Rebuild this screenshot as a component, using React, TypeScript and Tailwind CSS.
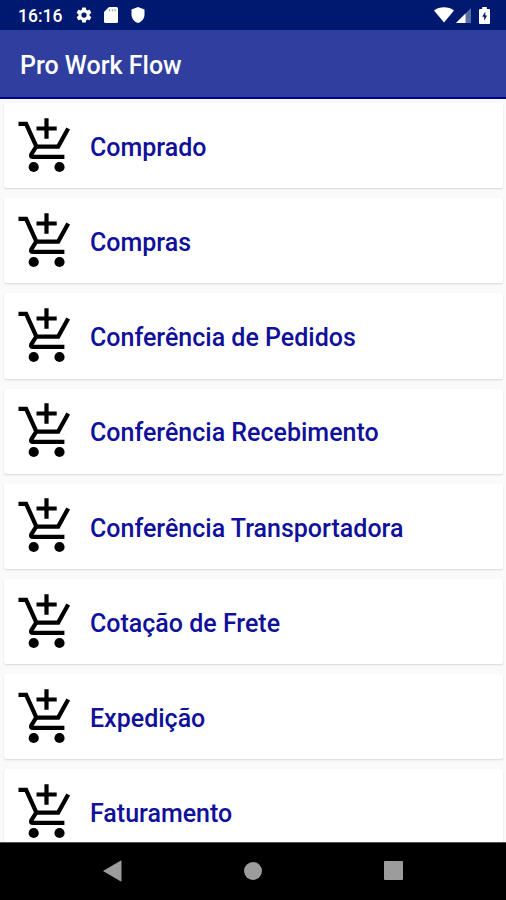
type CartRowProps = {
  label: string;
};

const sections = [
  "Comprado",
  "Compras",
  "Conferência de Pedidos",
  "Conferência Recebimento",
  "Conferência Transportadora",
  "Cotação de Frete",
  "Expedição",
  "Faturamento",
];

function AddCartIcon() {
  return (
    <svg width="54" height="56" viewBox="0 0 54 56" className="mb-[2px] shrink-0">
      <g fill="none" stroke="#000" strokeWidth="4.2">
        <path d="M1.5 6.8h7.600l10.300 22.800h21.800l10-18.200" />
        <path d="M19.200 29.600l-4.900 7.800q-.9 2.500 1.600 2.500h31.500" />
        <path d="M29.500 1.200v20.600M19.500 11.500h20.200" />
      </g>
      <circle cx="16.700" cy="50" r="5.100" />
      <circle cx="42.500" cy="50" r="5.100" />
    </svg>
  );
}

function CartRow({ label }: CartRowProps) {
  return (
    <div className="flex h-[85.2px] shrink-0 items-center rounded-[2px] bg-white pl-[13px] shadow-[0_1px_2px_rgba(0,0,0,0.14)]">
      <AddCartIcon />
      <span className="ml-[19px] pt-[4px] text-[25px] font-medium text-[#10109a]">
        {label}
      </span>
    </div>
  );
}

function StatusBar() {
  return (
    <div className="flex h-[30px] shrink-0 items-center bg-[#001970] pl-[18px] pr-[16.5px] text-white">
      <span className="pt-[2px] text-[17.5px] font-medium">16:16</span>
      <svg width="18" height="18" viewBox="0 0 24 24" fill="currentColor" className="ml-[13px]">
        <path d="M19.4 13a7.500 7.500 0 0 0 0-2l2.100-1.650a.5.5 0 0 0 .12-.64l-2-3.460a.5.5 0 0 0-.61-.22l-2.490 1a7.300 7.300 0 0 0-1.690-.98l-.38-2.650A.49.49 0 0 0 14 2h-4a.49.49 0 0 0-.49.42l-.38 2.650c-.61.250-1.170.59-1.690.98l-2.490-1a.5.5 0 0 0-.61.22l-2 3.460a.5.5 0 0 0 .12.64L4.570 11a7.900 7.900 0 0 0 0 2l-2.110 1.650a.5.5 0 0 0-.12.64l2 3.460c.12.22.39.3.61.22l2.490-1c.52.4 1.080.73 1.690.98l.38 2.650c.03.240.240.42.49.42h4c.250 0 .46-.18.49-.42l.38-2.650c.61-.250 1.170-.59 1.690-.98l2.490 1c.23.09.49 0 .61-.22l2-3.460a.5.5 0 0 0-.12-.64L19.400 13ZM12 15.500a3.500 3.500 0 1 1 0-7 3.500 3.500 0 0 1 0 7Z" />
      </svg>
      <svg width="14" height="16" viewBox="0 0 14 16" className="ml-[11px]">
        <path d="M5 0h7.500Q14 0 14 1.500v13q0 1.500-1.500 1.500h-11Q0 16 0 14.500V5Z" fill="#fff" />
        <path d="M5.500 2v2.500M8.300 2v2.500M11 2v2.500" stroke="#8c97c0" strokeWidth="1" />
      </svg>
      <svg width="14" height="16" viewBox="0 0 14 16" fill="#fff" className="ml-[13px]">
        <path d="M7 0l6.500 2.400v5c0 4-2.600 7.200-6.500 8.600C3.100 14.600.5 11.400.5 7.400v-5Z" />
      </svg>
      <svg width="20" height="16" viewBox="0 0 20 16" fill="#fff" className="ml-auto">
        <path d="M0 3.500C5.500-.8 14.500-.8 20 3.500L10 15.500Z" />
      </svg>
      <svg width="15" height="15" viewBox="0 0 15 15" className="ml-[2px]">
        <path d="M0 15L15 0v15Z" fill="#5b6da5" />
        <path d="M0 15L9.500 5.500V15Z" fill="#fff" />
      </svg>
      <svg width="11" height="17" viewBox="0 0 11 17" className="ml-[8px]">
        <path d="M3.200 0h4.600v2H10q1 0 1 1v13q0 1-1 1H1q-1 0-1-1V3q0-1 1-1h2.200Z" fill="#fff" />
        <path d="M6.300 4.800L3.200 9.800h2v4l2.900-5.200h-1.800Z" fill="#001970" />
      </svg>
    </div>
  );
}

function NavigationBar() {
  return (
    <div className="flex h-[58px] shrink-0 items-center justify-between border-t border-[#555] bg-black px-[103px] pb-[2px]">
      <svg width="19" height="22" viewBox="0 0 19 22" fill="#9c9c9c">
        <path d="M0 11L17.500.8q1-.6 1 .5v19.400q0 1.100-1 .5Z" />
      </svg>
      <div className="h-[18px] w-[18px] rounded-full bg-[#9c9c9c]" />
      <div className="h-[19px] w-[19px] rounded-[1px] bg-[#9c9c9c]" />
    </div>
  );
}

export default function App() {
  return (
    <div className="flex h-[900px] w-[506px] flex-col overflow-hidden bg-[#fafafa] font-['Roboto',sans-serif]">
      <StatusBar />
      <div className="flex h-[69px] shrink-0 items-center border-b-2 border-[#00008b] bg-[#303f9f] pl-5 pt-[5px]">
        <h1 className="text-[25px] font-medium text-white">Pro Work Flow</h1>
      </div>
      <div className="flex min-h-0 flex-1 flex-col gap-[10px] overflow-hidden pt-1 pr-[3px] pl-1">
        {sections.map((label) => (
          <CartRow key={label} label={label} />
        ))}
      </div>
      <NavigationBar />
    </div>
  );
}
